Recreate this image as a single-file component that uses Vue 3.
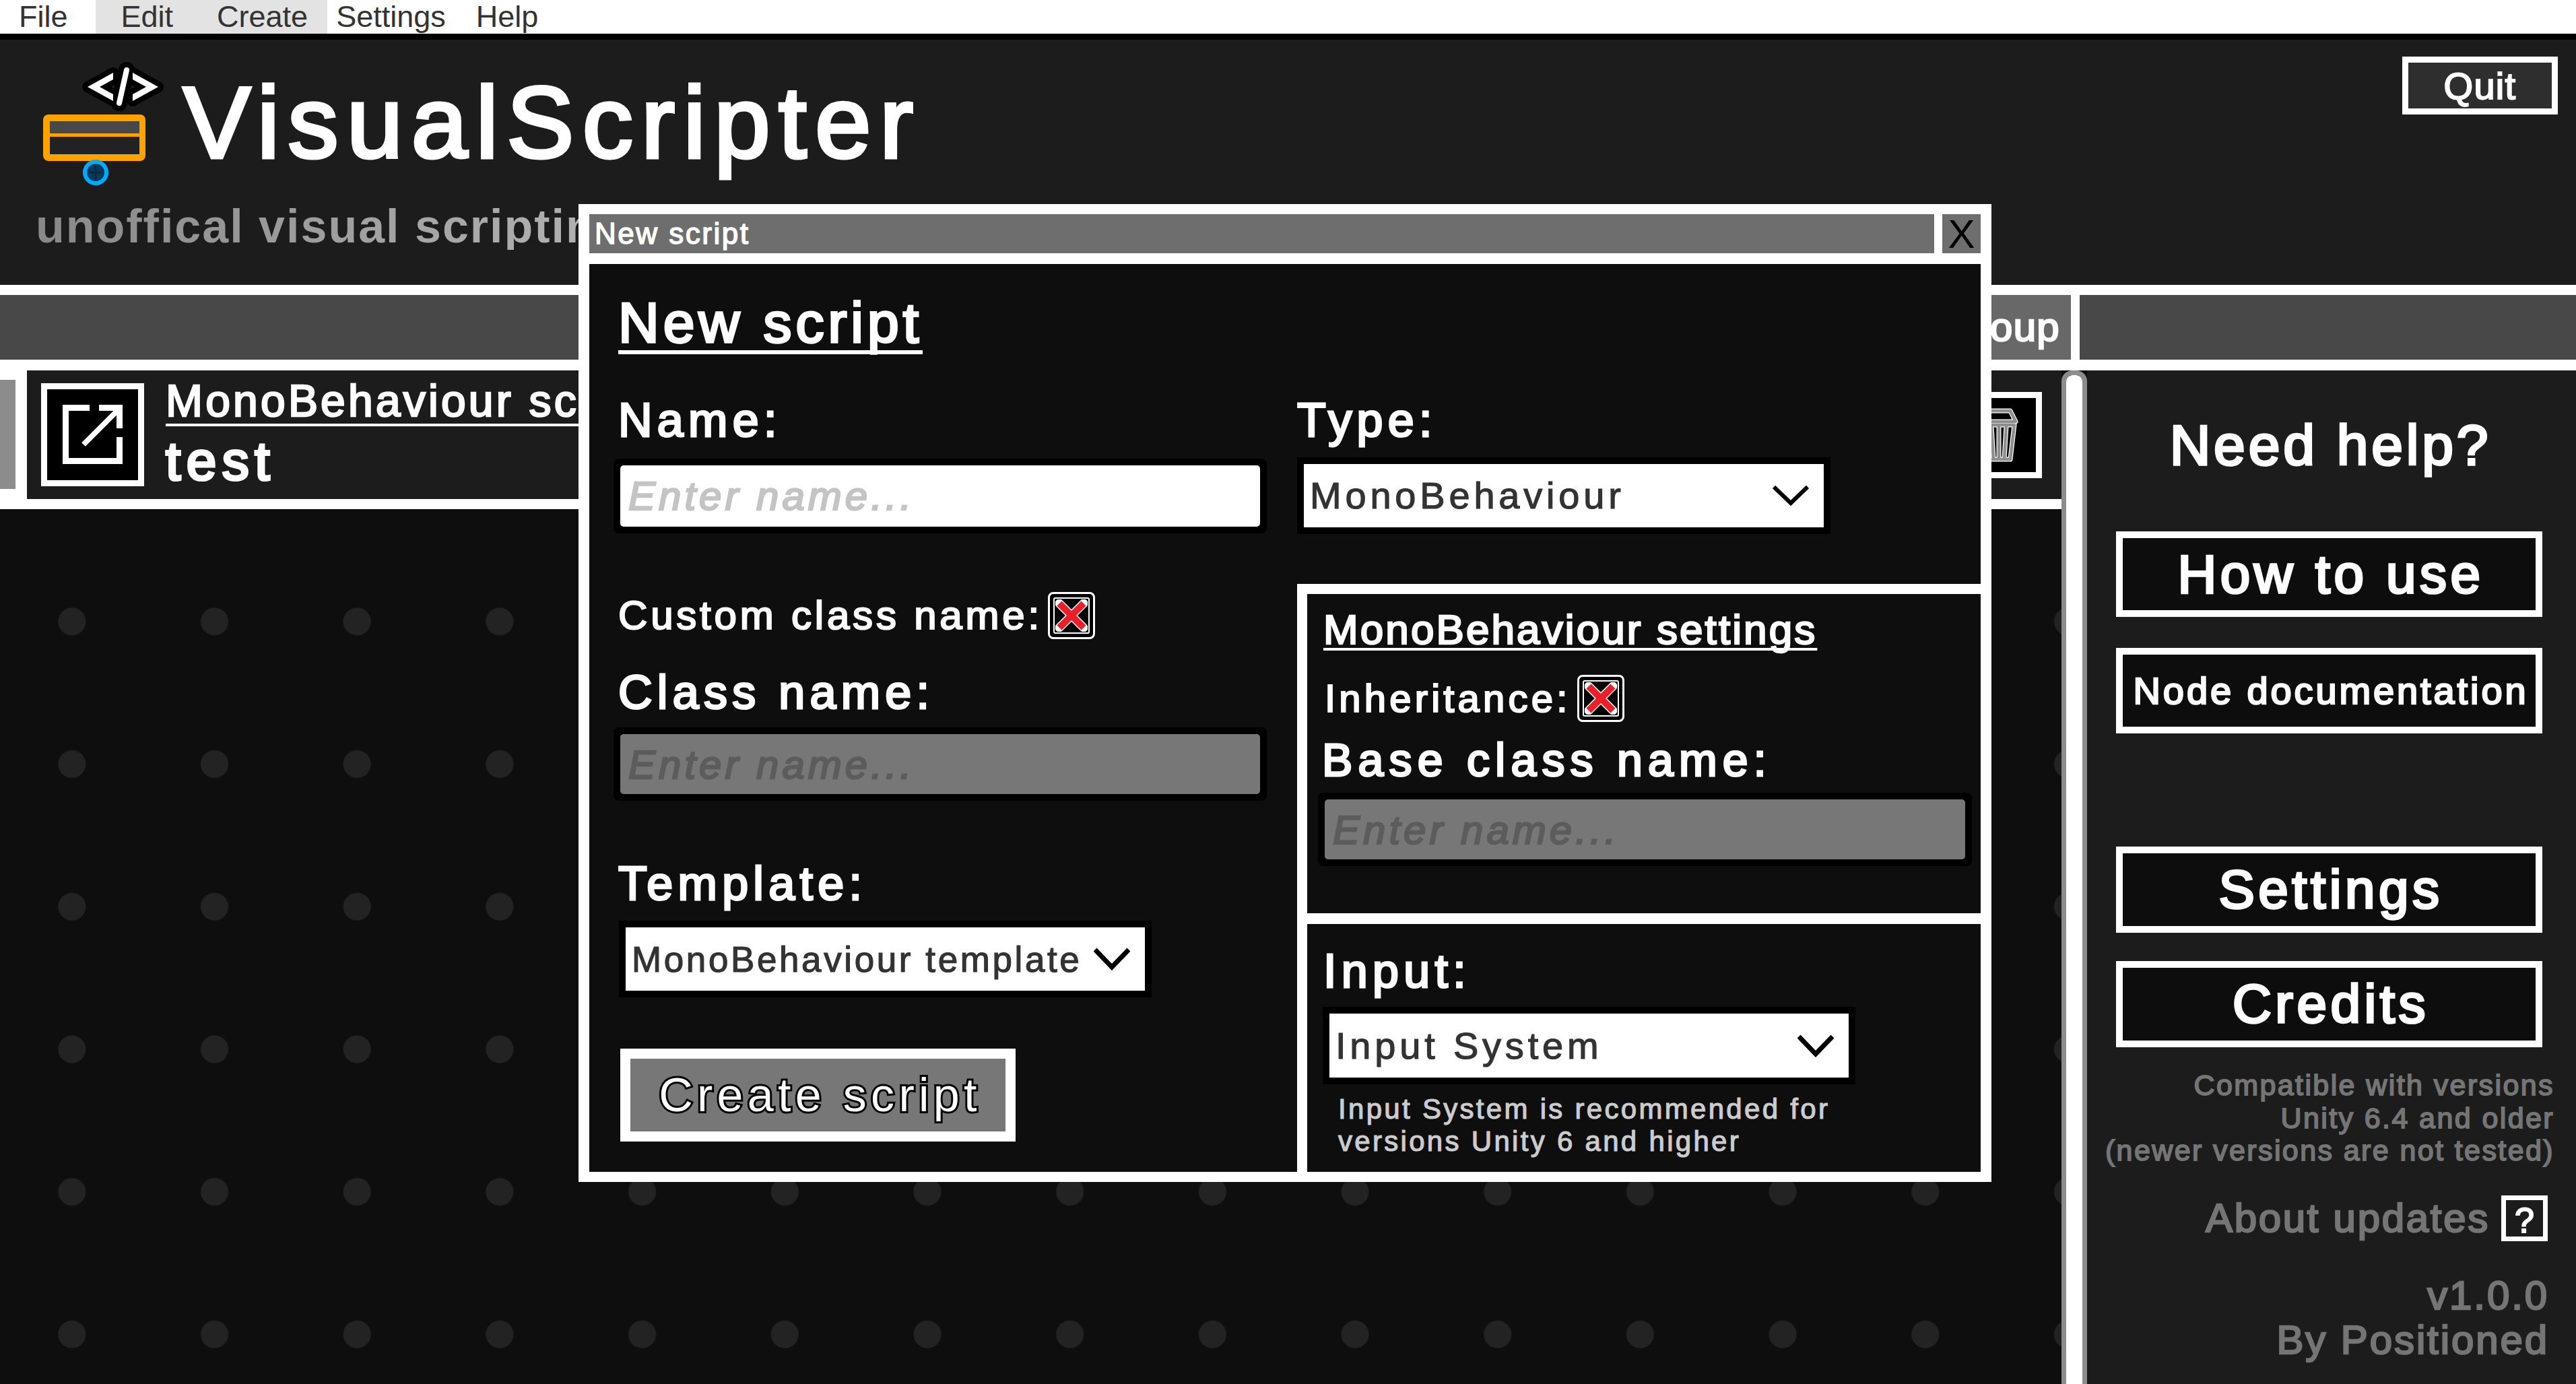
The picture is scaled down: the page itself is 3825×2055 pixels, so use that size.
<script setup>
const menu = [
  { label: 'File', cls: 'm-file' },
  { label: 'Edit', cls: 'm-edit' },
  { label: 'Create', cls: 'm-create' },
  { label: 'Settings', cls: 'm-settings' },
  { label: 'Help', cls: 'm-help' }
]
</script>

<template>
  <div class="app">
    <nav class="menu">
      <span v-for="m in menu" :key="m.label" class="menu-item" :class="m.cls">{{ m.label }}</span>
    </nav>

    <header class="header">
      <div class="header-left">
        <div class="brand">
          <svg class="logo" width="190" height="195" viewBox="60 90 190 195">
            <g fill="#000" stroke="#000" stroke-width="16" stroke-linejoin="round">
              <polygon points="130,129 168,108 168,118 148,129 168,140 168,150" />
              <polygon points="235,129 197,108 197,118 217,129 197,140 197,150" />
            </g>
            <line x1="188" y1="104" x2="177" y2="153" stroke="#000" stroke-width="24" stroke-linecap="round" />
            <g fill="#fff">
              <polygon points="130,129 168,108 168,118 148,129 168,140 168,150" />
              <polygon points="235,129 197,108 197,118 217,129 197,140 197,150" />
            </g>
            <line x1="188" y1="104" x2="177" y2="153" stroke="#fff" stroke-width="8" stroke-linecap="round" />
            <rect x="64" y="170" width="152" height="69" rx="8" fill="#ffa200" />
            <rect x="74" y="180" width="133" height="18" fill="#484848" />
            <rect x="74" y="203" width="133" height="26" fill="#222" />
            <circle cx="142" cy="256" r="16" fill="#003a5c" stroke="#00aaff" stroke-width="6" />
            <path d="M133 256 H151 M142 247 V265" stroke="#0b2a40" stroke-width="3" />
          </svg>
          <h1 class="title">VisualScripter</h1>
        </div>
        <p class="subtitle">unoffical visual scripting</p>
      </div>
      <button class="quit">Quit</button>
    </header>

    <div class="tabs">
      <div class="tab-fill"></div>
      <div class="tab-group">New group</div>
      <div class="tab-side"></div>
    </div>

    <div class="body">
      <div class="main">
        <div class="rows">
          <div class="row-handle"></div>
          <div class="card">
            <button class="open-btn">
              <svg width="135" height="135" viewBox="9 9 135 135" fill="none" stroke="#fff" stroke-width="9">
                <path d="M72 36.5 H36.5 V115.5 H116.5 V80" />
                <path d="M86 36.5 H116.5 V67" />
                <path d="M63 91 L116 38" stroke-width="8" />
              </svg>
            </button>
            <div class="card-text">
              <div class="card-type">MonoBehaviour script</div>
              <div class="card-name">test</div>
            </div>
            <button class="trash-btn">
              <svg width="110" height="110" viewBox="2913 590 110 110" fill="none" stroke-linejoin="round">
                <g stroke="#fff" stroke-width="7">
                  <path d="M2950 609 H2985 L2993 625 H2942 Z" />
                  <path d="M2945 630 L2951 681 H2985 L2991 630 Z" />
                  <path d="M2957 632 L2960 681 M2968 632 V681 M2979 632 L2976 681" />
                </g>
                <g stroke="#8e8e8e" stroke-width="4.5">
                  <path d="M2950 609 H2985 L2993 625 H2942 Z" />
                  <path d="M2945 630 L2951 681 H2985 L2991 630 Z" />
                  <path d="M2957 632 L2960 681 M2968 632 V681 M2979 632 L2976 681" />
                </g>
              </svg>
            </button>
          </div>
        </div>
        <div class="canvas"></div>
      </div>

      <div class="splitter"></div>

      <aside class="side">
        <h2 class="help">Need help?</h2>
        <button class="side-btn b-how">How to use</button>
        <button class="side-btn small b-node">Node documentation</button>
        <button class="side-btn b-settings">Settings</button>
        <button class="side-btn b-credits">Credits</button>
        <p class="compat">Compatible with versions<br />Unity 6.4 and older<br />(newer versions are not tested)</p>
        <div class="about">
          <span>About updates</span>
          <button class="q-btn">?</button>
        </div>
        <p class="version">v1.0.0<br />By Positioned</p>
      </aside>
    </div>

    <section class="modal">
      <div class="modal-bar">
        <div class="modal-title">New script</div>
        <button class="modal-x">X</button>
      </div>
      <div class="modal-body">
        <div class="col-left">
          <h2 class="heading">New script</h2>
          <label class="label l-name">Name:</label>
          <div class="field f-name"><div class="field-in">Enter name...</div></div>
          <div class="check-row r-custom">
            <span class="check-text">Custom class name:</span>
            <span class="check"><span class="check-in">
              <svg width="48" height="48" viewBox="0 0 48 48"><path d="M6 6 L42 42 M42 6 L6 42" stroke="#fff" stroke-width="13" stroke-linecap="round" /><path d="M6 6 L42 42 M42 6 L6 42" stroke="#e8202a" stroke-width="10" /></svg>
            </span></span>
          </div>
          <label class="label l-class">Class name:</label>
          <div class="field f-class disabled"><div class="field-in">Enter name...</div></div>
          <label class="label l-template">Template:</label>
          <div class="select s-template">
            <span>MonoBehaviour template</span>
            <svg width="54" height="34" viewBox="0 0 54 34" fill="none" stroke="#000" stroke-width="7"><path d="M2 3 L27 29 L52 3" /></svg>
          </div>
          <button class="create">Create script</button>
        </div>

        <div class="col-right">
          <div class="type-panel">
            <label class="label l-type">Type:</label>
            <div class="select s-type">
              <span>MonoBehaviour</span>
              <svg width="54" height="34" viewBox="0 0 54 34" fill="none" stroke="#000" stroke-width="6"><path d="M2 4 L27 28 L52 4" /></svg>
            </div>
          </div>
          <div class="mono-panel">
            <h3 class="sub-heading">MonoBehaviour settings</h3>
            <div class="check-row r-inherit">
              <span class="check-text inherit">Inheritance:</span>
              <span class="check"><span class="check-in">
                <svg width="48" height="48" viewBox="0 0 48 48"><path d="M6 6 L42 42 M42 6 L6 42" stroke="#fff" stroke-width="13" stroke-linecap="round" /><path d="M6 6 L42 42 M42 6 L6 42" stroke="#e8202a" stroke-width="10" /></svg>
              </span></span>
            </div>
            <label class="label l-base">Base class name:</label>
            <div class="field f-base disabled"><div class="field-in">Enter name...</div></div>
          </div>
          <div class="input-panel">
            <label class="label l-input">Input:</label>
            <div class="select s-input">
              <span>Input System</span>
              <svg width="54" height="34" viewBox="0 0 54 34" fill="none" stroke="#000" stroke-width="7"><path d="M2 3 L27 29 L52 3" /></svg>
            </div>
            <p class="note">Input System is recommended for<br />versions Unity 6 and higher</p>
          </div>
        </div>
      </div>
    </section>
  </div>
</template>

<style>
html, body { margin: 0; background: #0e0e0e; }
</style>

<style scoped>
.app {
  position: relative;
  width: 3825px;
  height: 2055px;
  overflow: hidden;
  font-family: "Liberation Sans", Arial, sans-serif;
  background: #0e0e0e;
  color: #fff;
  line-height: 1;
  letter-spacing: 0.08em;
}
h1, h2, h3, p { margin: 0; font-weight: 400; }
button { font-family: inherit; letter-spacing: inherit; color: inherit; padding: 0; cursor: default; }

/* menu */
.menu { display: flex; height: 50px; background: #fff; border-bottom: 9px solid #000; }
.menu-item { font-size: 45px; line-height: 50px; color: #333; letter-spacing: 0; }
.m-file { padding: 0 41px 0 28px; }
.m-edit { padding: 0 65px 0 38px; background: #e3e3e3; }
.m-create { padding: 0 29px 0 0; background: #e3e3e3; }
.m-settings { padding: 0 45px 0 13px; }

/* header */
.header { display: flex; justify-content: space-between; height: 364px; background: #1c1c1c; }
.brand { display: flex; padding-left: 60px; margin-top: 31px; }
.title { font-size: 150px; letter-spacing: 12.4px; margin: 17px 0 0 22px; -webkit-text-stroke: 5px #fff; }
.subtitle {
  margin: 16px 0 0 53px;
  font-size: 70px;
  font-weight: 700;
  letter-spacing: 2px;
  white-space: nowrap;
  width: 960px;
  background: linear-gradient(90deg, #888, #b8b8b8);
  -webkit-background-clip: text;
  background-clip: text;
  color: transparent;
}
.quit {
  width: 231px; height: 86px; margin: 25px 27px 0 0;
  border: 9px solid #fff; background: #2e2e2e; font-size: 56px;
  -webkit-text-stroke: 2px #fff;
}

/* tabs */
.tabs { display: flex; height: 96px; border-top: 15px solid #fff; border-bottom: 16px solid #fff; background: #fff; }
.tab-fill { flex: 1; background: #484848; }
.tab-group {
  width: 340px; margin-right: 13px; background: #686868; font-size: 60px; line-height: 96px;
  text-align: right; padding-right: 16px; box-sizing: border-box; -webkit-text-stroke: 2.5px #fff;
}
.tab-side { width: 737px; background: #484848; }

/* body */
.body { display: flex; height: 1505px; }
.main { width: 3061px; display: flex; flex-direction: column; }
.rows { display: flex; background: #fff; height: 206px; padding-bottom: 15px; box-sizing: border-box; }
.row-handle { width: 23px; height: 162px; margin: 14px 17px 0 0; background: #8c8c8c; }
.card { flex: 1; display: flex; background: #1c1c1c; align-items: center; padding-left: 21px; }
.open-btn { width: 153px; height: 153px; border: 9px solid #fff; background: #000; flex: none; display: block; }
.open-btn svg, .trash-btn svg { display: block; }
.card-text { align-self: flex-start; margin: 12px 0 0 32px; }
.card-type {
  font-size: 66px; letter-spacing: 4.2px; text-decoration: underline; text-decoration-thickness: 4px;
  text-underline-offset: 11px; text-decoration-skip-ink: none; white-space: nowrap; -webkit-text-stroke: 2.5px #fff;
}
.card-name { font-size: 80px; letter-spacing: 8.5px; margin-top: 17px; -webkit-text-stroke: 4px #fff; }
.trash-btn { width: 128px; height: 128px; border: 9px solid #fff; background: #000; margin: 0 29px 0 auto; flex: none; }
.canvas {
  flex: 1;
  background-color: #0e0e0e;
  background-image: radial-gradient(circle, #232323 20px, transparent 21px);
  background-size: 211.7px 211.7px;
  background-position: 1px 61px;
}
.splitter {
  width: 38px; height: 1520px; box-sizing: border-box; background: #fff;
  border: 7px solid #8c8c8c; border-radius: 16px; background-clip: padding-box;
}

/* sidebar */
.side { width: 726px; background: #1c1c1c; display: flex; flex-direction: column; padding-left: 43px; box-sizing: border-box; }
.help { font-size: 84px; letter-spacing: 4.8px; margin-top: 69px; width: 633px; margin-left: 2px; text-align: center; -webkit-text-stroke: 3.5px #fff; }
.side-btn {
  width: 633px; height: 127px; box-sizing: border-box; border: 10px solid #fff; background: #0d0d0d;
  font-size: 80px; letter-spacing: 5.5px; padding-left: 5px; -webkit-text-stroke: 3.5px #fff;
}
.side-btn.small { font-size: 56px; letter-spacing: 3.9px; -webkit-text-stroke: 2.5px #fff; }
.b-how { margin-top: 86px; }
.b-node { margin-top: 46px; }
.b-settings { margin-top: 168px; height: 128px; }
.b-credits { margin-top: 42px; height: 128px; }
.compat { margin: 32px 32px 0 -40px; font-size: 43px; line-height: 48.5px; letter-spacing: 2.4px; color: #757575; text-align: right; white-space: nowrap; -webkit-text-stroke: 1.8px #757575; }
.about { display: flex; justify-content: flex-end; align-items: center; gap: 17px; margin: 42px 42px 0 0; padding-bottom: 2px; font-size: 60px; letter-spacing: 2.7px; color: #757575; -webkit-text-stroke: 2.5px #757575; white-space: nowrap; }
.q-btn { width: 69px; height: 68px; box-sizing: border-box; border: 7px solid #fff; background: #1c1c1c; color: #fff; font-size: 52px; letter-spacing: 0; -webkit-text-stroke: 2px #fff; }
.version { margin: 46px 40px 0 0; font-size: 60px; line-height: 66px; letter-spacing: 2.9px; color: #757575; text-align: right; -webkit-text-stroke: 2.5px #757575; white-space: nowrap; }

/* modal */
.modal {
  position: absolute; left: 859px; top: 303px; width: 2098px; height: 1452px;
  box-sizing: border-box; background: #fff; padding: 15px 16px 15px 16px; display: flex; flex-direction: column;
}
.modal-bar { display: flex; height: 58px; }
.modal-title { flex: 1; background: #6e6e6e; font-size: 44px; line-height: 58px; padding-left: 8px; letter-spacing: 2.5px; margin-right: 12px; -webkit-text-stroke: 1.5px #fff; }
.modal-x { width: 57px; height: 58px; border: 0; background: #6e6e6e; color: #000; font-size: 60px; line-height: 1; letter-spacing: 0; padding-bottom: 6px; box-sizing: border-box; }
.modal-body { flex: 1; display: flex; margin-top: 16px; min-height: 0; }
.col-left { width: 1051px; background: #0e0e0e; padding-left: 36px; box-sizing: border-box; display: flex; flex-direction: column; align-items: flex-start; }
.col-right { flex: 1; display: flex; flex-direction: column; min-width: 0; }

.heading { font-size: 84px; letter-spacing: 6px; margin: 45px 0 0 7px; text-decoration: underline; text-decoration-thickness: 6px; text-underline-offset: 12px; text-decoration-skip-ink: none; -webkit-text-stroke: 3.5px #fff; }
.label { display: block; font-size: 70px; letter-spacing: 7.3px; -webkit-text-stroke: 3px #fff; white-space: nowrap; }
.l-name { margin: 68px 0 0 7px; }
.l-class { margin: 45px 0 0 7px; }
.l-template { margin: 88px 0 0 7px; }
.l-type { margin-top: 197px; }
.l-base { margin: 23px 0 0 22px; font-size: 68px; letter-spacing: 8.2px; }
.l-input { margin: 35px 0 0 24px; }

.field { box-sizing: border-box; height: 111px; width: 970px; background: #000; border-radius: 8px; padding: 10px; }
.field-in { height: 100%; background: #fff; border-radius: 5px; color: #c4c4c4; font-size: 60px; font-style: italic; line-height: 91px; padding-left: 12px; letter-spacing: 5px; box-sizing: border-box; -webkit-text-stroke: 2.5px #c4c4c4; }
.field.disabled .field-in { background: #777; color: #5c5c5c; -webkit-text-stroke: 2.5px #5c5c5c; }
.f-name { margin-top: 22px; }
.f-class { margin-top: 17px; height: 109px; }
.f-base { margin: 15px 0 0 16px; width: 971px; height: 109px; }

.check-row { display: flex; align-items: center; height: 69px; }
.r-custom { margin-top: 87px; }
.r-inherit { margin: 36px 0 0 22px; }
.check-text { font-size: 60px; letter-spacing: 4.8px; margin-left: 7px; white-space: nowrap; -webkit-text-stroke: 2.2px #fff; }
.check-text.inherit { font-size: 58px; letter-spacing: 5.2px; margin-left: 4px; }
.check { margin-left: 8px; width: 70px; height: 70px; box-sizing: border-box; border: 3px solid #fff; border-radius: 8px; padding: 5px; display: block; background: #000; }
.r-inherit .check { margin-left: 10px; }
.check-in { display: flex; align-items: center; justify-content: center; width: 100%; height: 100%; box-sizing: border-box; border: 2px solid #fff; border-radius: 3px; background: #000; }

.select { box-sizing: border-box; display: flex; align-items: center; justify-content: space-between; width: 791px; height: 114px; border: 10px solid #000; background: #fff; color: #333; font-size: 56px; letter-spacing: 5.8px; padding: 0 22px 0 9px; -webkit-text-stroke: 1.2px #333; white-space: nowrap; }
.s-template { margin: 20px 0 0 8px; font-size: 53px; letter-spacing: 3.6px; }
.s-type { margin-top: 20px; width: 792px; }
.s-input { margin: 18px 0 0 23px; height: 115px; }

.create { margin: 76px 0 0 10px; width: 587px; height: 138px; box-sizing: border-box; border: 15px solid #fff; background: #777; font-size: 70px; letter-spacing: 6.3px; padding-left: 6px; color: #fff; -webkit-text-stroke: 6px #000; paint-order: stroke fill; }

.type-panel { height: 475px; flex: none; background: #0e0e0e; }
.mono-panel { height: 474px; flex: none; margin: 15px 0 0 15px; background: #0e0e0e; }
.input-panel { flex: 1; margin: 16px 0 0 15px; background: #0e0e0e; }
.sub-heading { font-size: 62px; letter-spacing: 3.1px; margin: 22px 0 0 24px; text-decoration: underline; text-decoration-thickness: 4px; text-underline-offset: 6px; text-decoration-skip-ink: none; -webkit-text-stroke: 2.5px #fff; white-space: nowrap; }
.note { margin: 13px 0 0 46px; font-size: 42px; line-height: 48px; letter-spacing: 3.3px; color: #ccc; white-space: nowrap; -webkit-text-stroke: 1.2px #ccc; }
</style>
